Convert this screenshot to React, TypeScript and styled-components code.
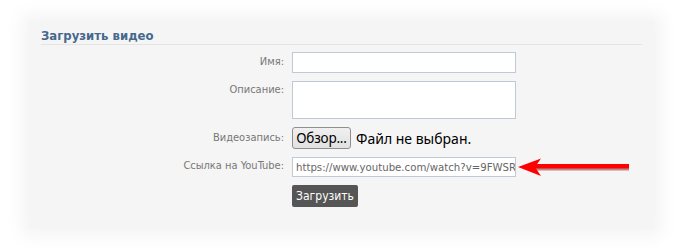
import React from 'react'
import styled, { createGlobalStyle } from 'styled-components'

const GlobalStyle = createGlobalStyle`
  html, body {
    margin: 0;
    padding: 0;
    background: #ffffff;
  }
  body {
    width: 688px;
    height: 251px;
    overflow: hidden;
    font-family: "DejaVu Sans Condensed", "DejaVu Sans", sans-serif;
  }
`

const Page = styled.div`
  position: relative;
  padding: 21px 0 0 29px;
`

const Panel = styled.div`
  width: 626px;
  height: 208px;
  box-sizing: border-box;
  padding: 7px 13px 0 12px;
  background: #f5f5f5;
  box-shadow: 0 0 16px 8px #f5f5f5;
`

const Title = styled.h2`
  margin: 0;
  padding: 0;
  font-size: 13px;
  line-height: 16px;
  font-weight: bold;
  color: #45688e;
  border-bottom: 1px solid #e4e4e4;
`

const Form = styled.div`
  display: grid;
  grid-template-columns: 243px 1fr;
  column-gap: 8px;
  row-gap: 8px;
  margin-top: 7px;
`

const Label = styled.div<{ $top: number }>`
  padding-top: ${p => p.$top}px;
  text-align: right;
  font-size: 11px;
  line-height: 13px;
  color: #777777;
`

const TextInput = styled.div<{ $height: number }>`
  width: 224px;
  height: ${p => p.$height}px;
  box-sizing: border-box;
  background: #ffffff;
  border: 1px solid #c0cad5;
  padding: 2px 3px 0;
  font-size: 11.3px;
  line-height: 15px;
  color: #666666;
  white-space: nowrap;
  overflow: hidden;
`

const FileRow = styled.div`
  display: flex;
  align-items: center;
  gap: 5px;
  height: 22px;
  font-family: "Noto Sans", sans-serif;
  font-size: 14px;
  color: #000000;
`

const BrowseButton = styled.div`
  width: 59px;
  height: 22px;
  box-sizing: border-box;
  display: flex;
  align-items: center;
  justify-content: center;
  font-size: 13.5px;
  letter-spacing: -0.2px;
  background: linear-gradient(#f0f0f0, #e1e1e1);
  border: 1px solid #8f8f8f;
  border-radius: 3px;
`

const SubmitButton = styled.div`
  width: 66px;
  height: 22px;
  box-sizing: border-box;
  display: flex;
  align-items: center;
  justify-content: center;
  background: #555555;
  color: #ffffff;
  font-size: 12px;
  border-radius: 2px;
`

const Arrow = styled.svg`
  position: absolute;
  left: 514px;
  top: 155px;
`

export default function App() {
  return (
    <>
      <GlobalStyle />
      <Page>
        <Panel>
          <Title>Загрузить видео</Title>
          <Form>
            <Label $top={3}>Имя:</Label>
            <TextInput $height={21} />
            <Label $top={2}>Описание:</Label>
            <TextInput $height={38} />
            <Label $top={4}>Видеозапись:</Label>
            <FileRow>
              <BrowseButton>Обзор...</BrowseButton>
              <span>Файл не выбран.</span>
            </FileRow>
            <Label $top={2}>Ссылка на YouTube:</Label>
            <TextInput $height={20}>https://www.youtube.com/watch?v=9FWSR0</TextInput>
            <div />
            <SubmitButton>Загрузить</SubmitButton>
          </Form>
        </Panel>
        <Arrow width="120" height="26" viewBox="0 0 120 26">
          <rect x="22" y="10.5" width="93" height="5" fill="#7a2020" opacity="0.5" />
          <rect x="20" y="9" width="95" height="4.5" fill="#ff0000" />
          <polygon points="4,12 27,3.5 21,12 27,21" fill="#ff0000" />
        </Arrow>
      </Page>
    </>
  )
}
